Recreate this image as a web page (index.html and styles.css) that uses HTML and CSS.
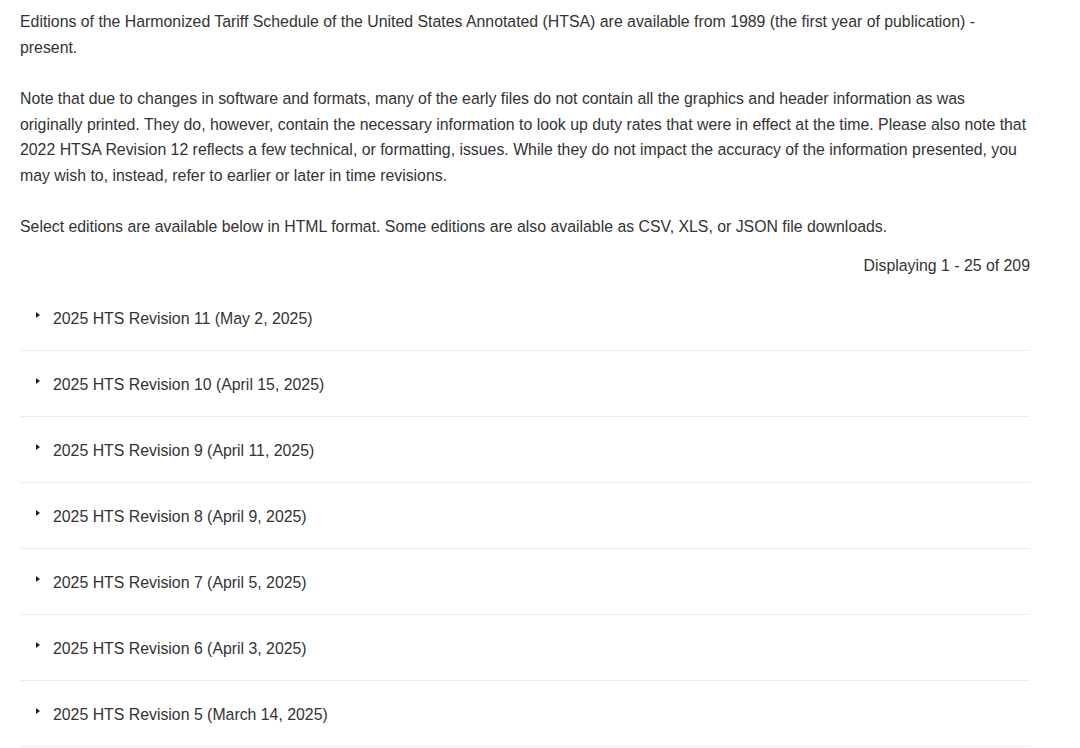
FILE: index.html
```html
<!DOCTYPE html>
<html lang="en">
<head>
  <meta charset="UTF-8">
  <title>HTSA Editions</title>
  <link rel="stylesheet" href="styles.css">
</head>
<body>
  <div class="page">
    <p>Editions of the Harmonized Tariff Schedule of the United States Annotated (HTSA) are available from 1989 (the first year of publication) - present.</p>
    <p>Note that due to changes in software and formats, many of the early files do not contain all the graphics and header information as was originally printed. They do, however, contain the necessary information to look up duty rates that were in effect at the time. Please also note that 2022 HTSA Revision 12 reflects a few technical, or formatting, issues. While they do not impact the accuracy of the information presented, you may wish to, instead, refer to earlier or later in time revisions.</p>
    <p>Select editions are available below in HTML format. Some editions are also available as CSV, XLS, or JSON file downloads.</p>

    <div class="count">Displaying 1 - 25 of 209</div>

    <div class="editions">
      <details class="edition"><summary>2025 HTS Revision 11 (May 2, 2025)</summary></details>
      <details class="edition"><summary>2025 HTS Revision 10 (April 15, 2025)</summary></details>
      <details class="edition"><summary>2025 HTS Revision 9 (April 11, 2025)</summary></details>
      <details class="edition"><summary>2025 HTS Revision 8 (April 9, 2025)</summary></details>
      <details class="edition"><summary>2025 HTS Revision 7 (April 5, 2025)</summary></details>
      <details class="edition"><summary>2025 HTS Revision 6 (April 3, 2025)</summary></details>
      <details class="edition"><summary>2025 HTS Revision 5 (March 14, 2025)</summary></details>
    </div>
  </div>
</body>
</html>
```

FILE: styles.css
```css
html, body {
  margin: 0;
  padding: 0;
  background: #fff;
  font-family: "Liberation Sans", Arial, sans-serif;
  font-size: 15.85px;
  line-height: 25.5px;
  color: #333;
  overflow: hidden;
}

.page {
  width: 1010px;
  padding: 9px 20px 0;
}

p {
  margin: 0 0 26px;
}

.count {
  text-align: right;
  margin-top: -13px;
}

.editions {
  margin-top: 7px;
}

.edition {
  border-bottom: 1px solid #ececec;
}

.edition summary {
  list-style: none;
  line-height: 25px;
  padding: 21px 0 19px 33px;
  position: relative;
  cursor: pointer;
}

.edition summary::-webkit-details-marker {
  display: none;
}

/* small closed-state arrow */
.edition summary::before {
  content: "";
  position: absolute;
  left: 15.5px;
  top: 27px;
  border-left: 4.5px solid #222;
  border-top: 3.5px solid transparent;
  border-bottom: 3.5px solid transparent;
}
```
